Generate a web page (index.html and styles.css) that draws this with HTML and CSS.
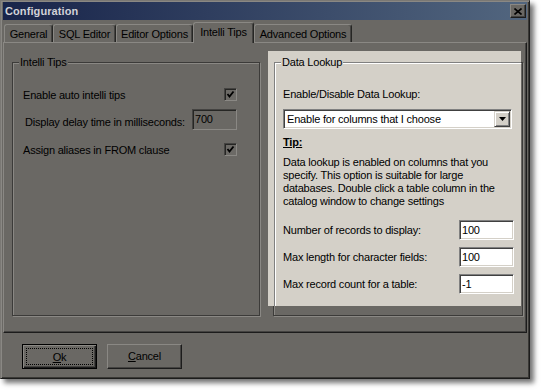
FILE: index.html
```html
<!DOCTYPE html>
<html>
<head>
<meta charset="utf-8">
<link rel="stylesheet" href="styles.css">
</head>
<body>
<div class="window">
  <div class="titlebar">
    <span class="title">Configuration</span>
    <span class="close"><svg width="8" height="7" viewBox="0 0 8 7"><path d="M0.5 0.5 L7.5 6.5 M7.5 0.5 L0.5 6.5" stroke="#000" stroke-width="1.6" fill="none"/></svg></span>
  </div>
  <div class="tabs">
    <div class="tab tab-general">General</div>
    <div class="tab tab-sql">SQL Editor</div>
    <div class="tab tab-editor">Editor Options</div>
    <div class="tab tab-intelli active">Intelli Tips</div>
    <div class="tab tab-advanced">Advanced Options</div>
  </div>
  <div class="panel">
    <div class="group group-left">
      <span class="legend">Intelli Tips</span>
      <div class="row row-first">
        <span>Enable auto intelli tips</span>
        <span class="check"><svg width="11" height="11" viewBox="0 0 11 11"><path d="M2.5 5 L4.5 7.5 L8.5 2.5" stroke="#000" stroke-width="1.8" fill="none"/></svg></span>
      </div>
      <div class="row row-input">
        <span class="lbl-indent">Display delay time in milliseconds:</span>
        <span class="textbox-dim">700</span>
      </div>
      <div class="row row-last">
        <span>Assign aliases in FROM clause</span>
        <span class="check"><svg width="11" height="11" viewBox="0 0 11 11"><path d="M2.5 5 L4.5 7.5 L8.5 2.5" stroke="#000" stroke-width="1.8" fill="none"/></svg></span>
      </div>
    </div>
    <div class="group group-right"></div>
  </div>
  <div class="buttons">
    <div class="btn btn-default"><span class="focus"><u>O</u>k</span></div>
    <div class="btn"><u>C</u>ancel</div>
  </div>
</div>

<div class="spotlight">
  <div class="lgroup">
    <span class="llegend">Data Lookup</span>
    <div class="lbl-top">Enable/Disable Data Lookup:</div>
    <div class="select">
      <span class="select-text">Enable for columns that I choose</span>
      <span class="dropbtn"><svg width="7" height="4" viewBox="0 0 7 4"><path d="M0 0 H7 L3.5 4 Z" fill="#000"/></svg></span>
    </div>
    <div class="tip">Tip:</div>
    <div class="para">Data lookup is enabled on columns that you<br>specify. This option is suitable for large<br>databases. Double click a table column in the<br>catalog window to change settings</div>
    <div class="field field-first"><span>Number of records to display:</span><span class="textbox">100</span></div>
    <div class="field"><span>Max length for character fields:</span><span class="textbox">100</span></div>
    <div class="field"><span>Max record count for a table:</span><span class="textbox">-1</span></div>
  </div>
</div>
</body>
</html>
```

FILE: styles.css
```css
html, body {
  margin: 0;
  padding: 0;
  background: #ffffff;
}
body {
  width: 544px;
  height: 392px;
  position: relative;
  overflow: hidden;
  font-family: "Liberation Sans", Arial, sans-serif;
  font-size: 11px;
  letter-spacing: -0.2px;
  color: #000;
}

/* ---------- dimmed window ---------- */
.window {
  width: 530px;
  height: 379px;
  box-sizing: border-box;
  background: #6a6864;
  border: 1px solid;
  border-color: #7a7874 #1c1c1c #1c1c1c #7a7874;
  box-shadow: inset 1px 1px 0 #8a8884, inset -1px -1px 0 #3a3936, 4px 4px 5px rgba(0,0,0,0.55);
  padding: 1px 2px;
  display: flex;
  flex-direction: column;
}
.titlebar {
  height: 18px;
  flex: none;
  display: flex;
  align-items: center;
  justify-content: space-between;
  padding: 0 1px 0 2px;
  background: linear-gradient(to right, #18244a, #52667f);
}
.title {
  color: #d2d3d8;
  font-weight: bold;
  font-size: 11px;
  letter-spacing: 0.1px;
}
.close {
  width: 16px;
  height: 14px;
  box-sizing: border-box;
  background: #6a6864;
  border: 1px solid;
  border-color: #8a8884 #1c1c1c #1c1c1c #8a8884;
  box-shadow: inset -1px -1px 0 #424240;
  display: flex;
  align-items: center;
  justify-content: center;
}

.tabs {
  margin-top: 2px;
  height: 20px;
  flex: none;
  display: flex;
  align-items: flex-end;
  padding-left: 1px;
  position: relative;
  z-index: 1;
}
.tab {
  height: 18px;
  box-sizing: border-box;
  border-top: 1px solid #8a8884;
  border-left: 1px solid #8a8884;
  border-right: 1px solid #262624;
  box-shadow: inset -1px 0 0 #444341;
  border-radius: 3px 3px 0 0;
  display: flex;
  align-items: center;
  justify-content: center;
  padding-top: 1px;
  white-space: nowrap;
}
.tab.active {
  height: 21px;
  margin-bottom: -1px;
  background: #6a6864;
  padding-bottom: 3px;
}
.tab-general { width: 49px; }
.tab-sql { width: 63px; }
.tab-editor { width: 77px; }
.tab-intelli { width: 61px; }
.tab-advanced { width: 98px; }

.panel {
  height: 291px;
  flex: none;
  box-sizing: border-box;
  border: 1px solid;
  border-color: #8a8884 #1c1c1c #1c1c1c #8a8884;
  box-shadow: inset -1px -1px 0 #444341;
  display: flex;
  gap: 13px;
  padding: 19px 0 0 8px;
}
.group {
  height: 254px;
  box-sizing: border-box;
  border: 1px solid #3c3b39;
  box-shadow: inset 1px 1px 0 #8a8884, 1px 1px 0 #8a8884;
  position: relative;
}
.group-left {
  width: 248px;
  padding: 24px 22px 0 10px;
  display: flex;
  flex-direction: column;
}
.group-right {
  width: 250px;
}
.legend {
  position: absolute;
  left: 6px;
  top: -7px;
  padding: 0 1px;
  background: #6a6864;
  line-height: 13px;
}
.row {
  display: flex;
  justify-content: space-between;
  align-items: center;
  white-space: nowrap;
}
.row-first { height: 15px; }
.row-input {
  height: 21px;
  margin-top: 7px;
  align-items: flex-end;
}
.row-last {
  height: 15px;
  margin-top: 12px;
}
.lbl-indent {
  padding-left: 2px;
  padding-bottom: 1px;
  line-height: 13px;
}
.check {
  width: 13px;
  height: 13px;
  box-sizing: border-box;
  border: 1px solid;
  border-color: #444341 #8a8884 #8a8884 #444341;
  box-shadow: inset 1px 1px 0 #262624;
  background: #6c6a66;
  display: flex;
  align-items: center;
  justify-content: center;
}
.textbox-dim {
  width: 45px;
  height: 21px;
  box-sizing: border-box;
  border: 1px solid;
  border-color: #444341 #8a8884 #8a8884 #444341;
  box-shadow: inset 1px 1px 0 #262624;
  padding: 3px 0 0 2px;
  line-height: 13px;
}

.buttons {
  flex: 1;
  display: flex;
  gap: 10px;
  padding: 11px 0 0 19px;
  align-items: flex-start;
}
.btn {
  width: 75px;
  height: 25px;
  box-sizing: border-box;
  border: 1px solid;
  border-color: #8a8884 #1c1c1c #1c1c1c #8a8884;
  box-shadow: inset -1px -1px 0 #444341;
  display: flex;
  align-items: center;
  justify-content: center;
  padding-bottom: 1px;
}
.btn-default {
  border: 1px solid #000;
  box-shadow: inset 1px 1px 0 #8a8884, inset -1px -1px 0 #1c1c1c, inset -2px -2px 0 #444341;
  padding: 3px;
}
.focus {
  flex: 1;
  align-self: stretch;
  border: 1px dotted #000;
  display: flex;
  align-items: center;
  justify-content: center;
}

/* ---------- highlighted region ---------- */
.spotlight {
  position: absolute;
  left: 268px;
  top: 51px;
  width: 253px;
  height: 255px;
  background: #d4d0c8;
  overflow: hidden;
  padding: 11px 0 0 6px;
  box-sizing: border-box;
}
.lgroup {
  position: relative;
  width: 249px;
  height: 254px;
  box-sizing: border-box;
  border: 1px solid #808080;
  box-shadow: inset 1px 1px 0 #ffffff, 1px 1px 0 #ffffff;
  padding: 0 0 0 8px;
}
.llegend {
  position: absolute;
  left: 6px;
  top: -7px;
  padding: 0 1px;
  background: #d4d0c8;
  line-height: 13px;
}
.lbl-top {
  margin-top: 25px;
  line-height: 13px;
}
.select {
  margin-top: 8px;
  width: 229px;
  height: 20px;
  box-sizing: border-box;
  background: #ffffff;
  border: 1px solid;
  border-color: #808080 #ffffff #ffffff #808080;
  box-shadow: inset 1px 1px 0 #404040, inset -1px -1px 0 #d4d0c8;
  padding: 1px;
  display: flex;
  justify-content: space-between;
}
.select-text {
  padding-left: 2px;
  line-height: 16px;
  white-space: nowrap;
}
.dropbtn {
  width: 16px;
  height: 16px;
  box-sizing: border-box;
  background: #d4d0c8;
  border: 1px solid;
  border-color: #d4d0c8 #404040 #404040 #d4d0c8;
  box-shadow: inset 1px 1px 0 #ffffff, inset -1px -1px 0 #808080;
  display: flex;
  align-items: center;
  justify-content: center;
  padding-left: 1px;
}
.tip {
  margin-top: 7px;
  line-height: 13px;
  font-weight: bold;
  text-decoration: underline;
}
.para {
  margin-top: 7px;
  line-height: 13px;
  white-space: nowrap;
}
.field {
  width: 231px;
  height: 20px;
  margin-top: 7px;
  display: flex;
  justify-content: space-between;
  align-items: center;
  white-space: nowrap;
}
.field-first { margin-top: 12px; }
.textbox {
  width: 55px;
  height: 20px;
  box-sizing: border-box;
  background: #ffffff;
  border: 1px solid;
  border-color: #808080 #ffffff #ffffff #808080;
  box-shadow: inset 1px 1px 0 #404040, inset -1px -1px 0 #d4d0c8;
  padding: 3px 0 0 2px;
  line-height: 13px;
}
```
